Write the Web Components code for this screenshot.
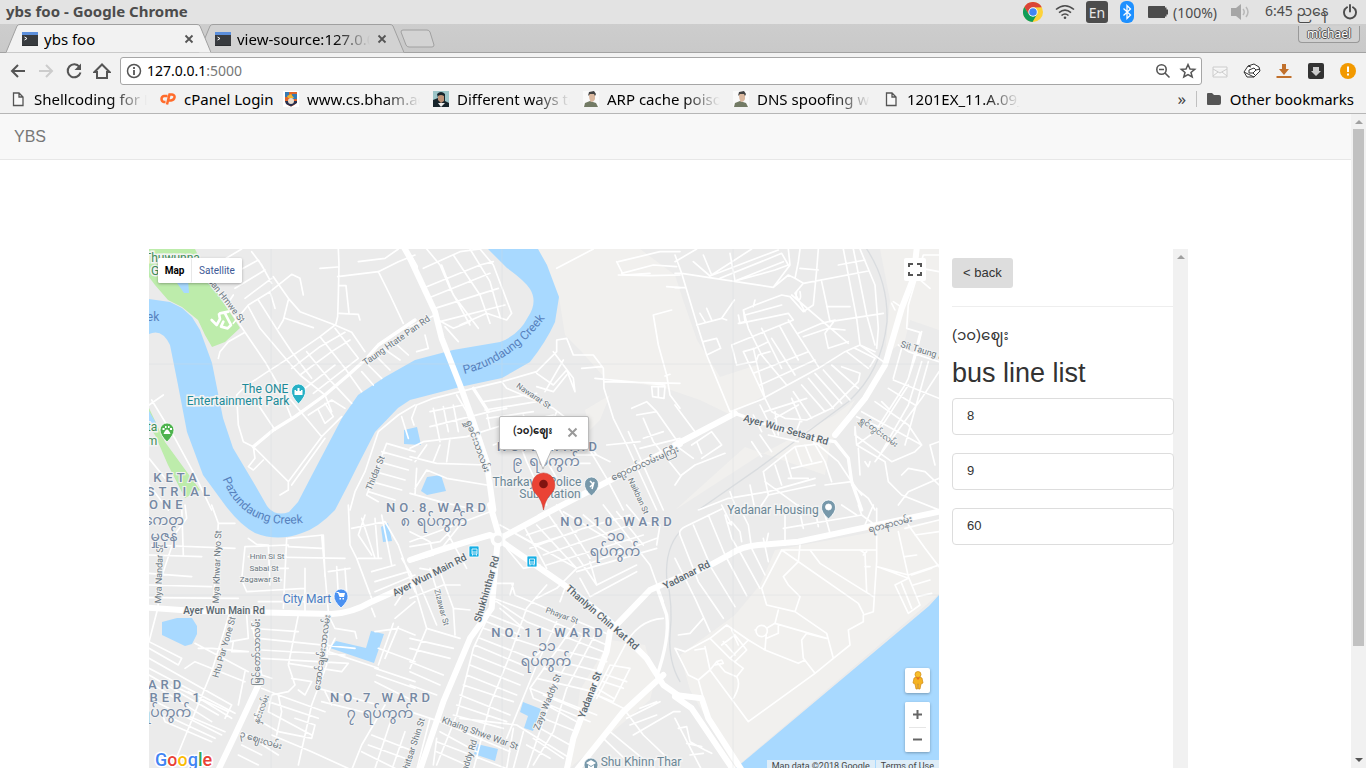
<!DOCTYPE html>
<html lang="en">
<head>
<meta charset="utf-8">
<title>ybs foo</title>
<style>
html, body { margin: 0; height: 100%; overflow: hidden; background: #fff; }
body { display: flex; flex-direction: column; font-family: "Liberation Sans", Arial, "Noto Sans Myanmar", sans-serif; font-size: 13px; color: #333; }
</style>
</head>
<body>
<system-bar></system-bar>
<tab-strip>
  <browser-tab active>ybs foo</browser-tab>
  <browser-tab>view-source:127.0.0.1:5000</browser-tab>
</tab-strip>
<address-bar></address-bar>
<bookmarks-bar></bookmarks-bar>
<page-view>
  <site-nav slot="nav">YBS</site-nav>
  <city-map></city-map>
  <bus-panel stop="(၁၀)ဈေး">
    <bus-line>8</bus-line>
    <bus-line>9</bus-line>
    <bus-line>60</bus-line>
  </bus-panel>
</page-view>

<script>
function element(name, html) {
  const template = document.createElement('template');
  template.innerHTML = html;
  customElements.define(name, class extends HTMLElement {
    constructor() {
      super();
      this.attachShadow({ mode: 'open' }).append(template.content.cloneNode(true));
    }
    connectedCallback() {
      const stop = this.shadowRoot.querySelector('[data-stop]');
      if (stop && this.hasAttribute('stop')) stop.textContent = this.getAttribute('stop');
    }
  });
}
const UI = 'font-family: "Noto Sans", "Open Sans", "Noto Sans Myanmar", sans-serif;';

element('system-bar', `
<style>
:host { display: flex; align-items: center; flex: none; height: 24px; padding: 0 9px 0 6px; background: #e3e3e3; color: #4c4c4c; ${UI} font-size: 14px; }
h1 { margin: 0; flex: 1; font-size: 15px; line-height: 22px; height: 24px; font-weight: 700; }
.tray { display: flex; align-items: center; }
svg { display: block; }
.en { width: 22px; height: 22px; line-height: 24px; border-radius: 3px; background: #4c4c4c; color: #e8e8e8; text-align: center; margin: 0 12px 0 11px; }
.wifi { margin-left: 12px; }
.battery { margin: 0 4px 0 14px; }
.volume { margin: 0 14px 0 12px; }
.power { margin-left: 14px; }
.clock { width: 64px; white-space: nowrap; line-height: 20px; height: 22px; }
.level { width: 46px; white-space: nowrap; }
</style>
<h1>ybs foo - Google Chrome</h1>
<div class="tray">
  <svg width="20" height="20" viewBox="0 0 20 20"><circle cx="10" cy="10" r="10" fill="#fdd23a"/><path d="M1.3 5A10 10 0 0 1 18.8 5.3L10 5.4 5.8 12.5Z" fill="#db4437"/><path d="M1.3 5A10 10 0 0 0 9.5 20L14 12.3 6 12.5Z" fill="#0f9d58"/><circle cx="10" cy="10" r="4.7" fill="#fff"/><circle cx="10" cy="10" r="3.8" fill="#4285f4"/></svg>
  <svg class="wifi" width="20" height="16" viewBox="0 0 20 16" fill="none" stroke="#4c4c4c" stroke-width="1.6"><path d="M1 5.5Q10-2 19 5.5M4 8.7Q10 3.5 16 8.7M6.5 11.5Q10 8.5 13.5 11.5"/><circle cx="10" cy="13.8" r="1.3" fill="#4c4c4c" stroke="none"/></svg>
  <span class="en">En</span>
  <svg width="14" height="22" viewBox="0 0 14 22"><rect width="14" height="22" rx="6" fill="#1e90ff"/><path d="M3.5 7.5L10.5 14 7 17.5V4.5L10.5 8 3.5 14.5" fill="none" stroke="#fff" stroke-width="1.3"/></svg>
  <svg class="battery" width="21" height="12" viewBox="0 0 21 12"><path d="M1 0H17V12H1Q0 12 0 11V1Q0 0 1 0M17 1.5H18.5V3.5H20V8.5H18.5V10.5H17Z" fill="#4c4c4c"/></svg>
  <span class="level">(100%)</span>
  <svg class="volume" width="20" height="16" viewBox="0 0 20 16"><path d="M0 4H5L10 0V16L5 12H0Z" fill="#a6a6a6"/><path d="M12 5Q14.500 8 12 11M15 3Q19 8 15 13" fill="none" stroke="#b8b8b8" stroke-width="1.5"/></svg>
  <span class="clock">6:45 ညနေ</span>
  <svg class="power" width="14" height="16" viewBox="0 0 14 16" fill="none" stroke="#4c4c4c" stroke-width="1.9" stroke-linecap="round"><path d="M4 3.300A6 6 0 1 0 10 3.300M7 1V7.500"/></svg>
</div>`);

element('tab-strip', `
<style>
:host { display: flex; flex: none; height: 29px; padding: 0 6px; background: linear-gradient(#cdcdcd, #c9c9c9); box-shadow: inset 0 -1px #a3a3a3; ${UI} font-size: 15px; color: #000; }
.new { align-self: center; width: 35px; height: 19px; padding: 0; border: 0; background: none; margin-left: 8px; }
svg { display: block; }
.user { margin: 2px 0 0 auto; width: 62px; height: 17px; padding: 0; border: 1px solid #999; border-top: 0; border-radius: 0 0 4px 4px; background: #d0d0d0; color: #fff; ${UI} font-size: 12px; line-height: 16px; text-shadow: 1px 0 #555, -1px 0 #555, 0 1px #555, 0 -1px #555; }
</style>
<slot></slot>
<button class="new" aria-label="New tab"><svg width="35" height="19" viewBox="0 0 35 19"><path d="M3 1H27Q29 1 30 3L34 16Q34 18 32 18H9Q7 18 6 16L1 3Q1 1 3 1Z" fill="#d3d3d3" stroke="#a0a0a0"/></svg></button>
<button class="user">michael</button>`);

element('browser-tab', `
<style>
:host { position: relative; display: flex; align-items: center; box-sizing: border-box; width: 205px; height: 29px; padding: 0 16px; margin-right: -12px; z-index: 0; }
:host([active]) { z-index: 1; --tab: #f2f2f2; }
.shape { position: absolute; inset: 0; width: 100%; height: 100%; z-index: -1; fill: var(--tab, #d2d2d2); }
.label { flex: 1; margin: 0 6px; white-space: nowrap; overflow: hidden; mask-image: linear-gradient(90deg, #000 calc(100% - 36px), transparent); }
:host([active]) .label { mask-image: none; }
button { flex: none; display: block; padding: 0; border: 0; background: none; width: 12px; height: 12px; }
svg { display: block; flex: none; }
</style>
<svg class="shape" viewBox="0 0 205 29" preserveAspectRatio="none"><path d="M0 28.500L11 2Q12 .5 14 .5H191Q193 .5 194 2L205 28.500Z"/><path d="M0 28.500L11 2Q12 .5 14 .5H191Q193 .5 194 2L205 28.500" fill="none" stroke="#a0a0a0"/></svg>
<svg width="16" height="14" viewBox="0 0 16 14"><rect width="16" height="14" fill="#2c2e31"/><path d="M0 0H16V3H0Z" fill="#5c8fdc"/><path d="M0 3H16V13H0Z" fill="#383b3f"/><path d="M2.500 5L5 6.500 2.500 8" fill="none" stroke="#fff"/></svg>
<span class="label"><slot></slot></span>
<button aria-label="Close tab"><svg width="12" height="12" viewBox="0 0 12 12" stroke="#555" stroke-width="1.8"><path d="M2.500 2.500L9.500 9.500M9.500 2.500L2.500 9.500"/></svg></button>`);

element('address-bar', `
<style>
:host { display: flex; align-items: center; flex: none; height: 35px; padding: 0 9px 0 9px; background: #f2f2f2; ${UI} }
button { flex: none; display: block; width: 18px; height: 18px; padding: 0; border: 0; background: none; margin-right: 10px; }
svg { display: block; fill: none; stroke: #555; stroke-width: 2; }
.box { position: relative; display: flex; align-items: center; flex: 1; box-sizing: border-box; height: 28px; margin: 0 9px 0 -1px; padding: 0 4px; border: 1px solid #a6a6a6; border-radius: 3px; background: #fff; font-size: 14px; }
input { flex: 1; min-width: 0; padding: 0; border: 0; outline: 0; margin-left: 4px; font: inherit; color: transparent; background: none; caret-color: #000; }
.url { position: absolute; left: 26px; color: #000; pointer-events: none; }
.url i { font-style: normal; color: #777; }
.box button { margin: 0; width: 18px; }
.box button + button { margin-left: 7px; }
.ext { margin: 0 0 0 14px; }
.ext.first { margin-left: 0; }
</style>
<button aria-label="Back"><svg width="18" height="18" viewBox="0 0 18 18"><path d="M16 9H3M9 3L3 9 9 15"/></svg></button>
<button aria-label="Forward"><svg width="18" height="18" viewBox="0 0 18 18" style="stroke:#ccc"><path d="M2 9H15M9 3L15 9 9 15"/></svg></button>
<button aria-label="Reload"><svg width="18" height="18" viewBox="0 0 18 18"><path d="M14.500 5A6.500 6.500 0 1 0 15.500 10.500"/><path d="M16 1.500V8H9.500Z" fill="#555" stroke="none"/></svg></button>
<button aria-label="Home"><svg width="18" height="18" viewBox="0 0 18 18"><path d="M1.500 10L9 2.500 16.500 10H14V16H4V10Z"/></svg></button>
<div class="box">
  <svg width="18" height="18" viewBox="0 0 18 18" style="stroke-width:1.5"><circle cx="9" cy="9" r="6.500"/><path d="M9 8V13M9 5V7" style="stroke-width:1.800"/></svg>
  <input aria-label="Address">
  <span class="url">127.0.0.1<i>:5000</i></span>
  <button aria-label="Zoom"><svg width="18" height="18" viewBox="0 0 18 18" style="stroke-width:1.600"><circle cx="7.500" cy="7.500" r="4.700"/><path d="M11 11L15.500 15.500M5 7.500H10"/></svg></button>
  <button aria-label="Bookmark"><svg width="18" height="18" viewBox="0 0 18 18" style="stroke-width:1.500"><path d="M9 2.500L11 7 15.700 7.300 12 10.400 13.200 15 9 12.500 4.800 15 6 10.400 2.300 7.300 7 7Z"/></svg></button>
</div>
<button class="ext first" aria-label="Mail extension"><svg width="18" height="18" viewBox="0 0 18 18" style="stroke:#ccc;stroke-width:1"><path d="M2 5H16V15H2ZM2 7L9 11 16 7M2 14L7 10M16 14L11 10" fill="#f7f7f7"/></svg></button>
<button class="ext" aria-label="Sketch extension"><svg width="18" height="18" viewBox="0 0 18 18" style="stroke:#333;stroke-width:1"><path d="M1 10L5 4 11 2 16 5 17 9 11 15 4 15Z" fill="#fff"/><path d="M6 8L11 6 13 8 10 11 6 11ZM1 10L5 12 11 15M5 4L8 5M13 8L17 7M10 11L12 13"/></svg></button>
<button class="ext" aria-label="Downloads"><svg width="18" height="18" viewBox="0 0 18 18"><path d="M7 2H11V7H14L9 13 4 7H7Z" fill="#c1702c" stroke="none"/><path d="M1.500 15H16.500" style="stroke:#c1702c"/></svg></button>
<button class="ext" aria-label="Download manager"><svg width="18" height="18" viewBox="0 0 18 18"><rect x="1" y="1" width="16" height="16" rx="2" fill="#333" stroke="none"/><path d="M6 5H12V9H14L9 14 4 9H6Z" fill="#ccc" stroke="none"/></svg></button>
<button class="ext" style="margin-right:0" aria-label="Update"><svg width="18" height="18" viewBox="0 0 18 18"><circle cx="9" cy="9" r="8" fill="#f29900" stroke="none"/><path d="M9 4.500V10M9 11.500V13.500" style="stroke:#fff"/></svg></button>`);

element('bookmarks-bar', `
<style>
:host { display: flex; align-items: center; flex: none; box-sizing: border-box; height: 26px; padding: 0 12px 4px 10px; background: #f2f2f2; border-bottom: 1px solid #b6b6b6; ${UI} font-size: 15px; }
nav { display: flex; gap: 12px; flex: 1; min-width: 0; }
a { display: flex; align-items: center; flex: none; gap: 8px; color: #000; text-decoration: none; white-space: nowrap; line-height: 20px; }
a.cut span { width: 114px; overflow: hidden; mask-image: linear-gradient(90deg, #000 76px, transparent 113px); }
a.short span { width: 87px; }
svg { display: block; flex: none; }
button { width: 20px; height: 20px; padding: 0; border: 0; background: none; ${UI} font-size: 17px; line-height: 18px; color: #444; }
.line { width: 1px; height: 16px; margin: 0 9px 0 4px; background: #c0c0c0; }
</style>
<nav>
<a class="cut" href="#"><svg width="16" height="16" viewBox="0 0 16 16"><path d="M3.500 2H9L13 6V14.500H3.500ZM9 2V6H13" fill="#f8f8f8" stroke="#555" stroke-width="1.300"/></svg><span>Shellcoding for L</span></a>
<a class="short" href="#"><svg width="16" height="16" viewBox="0 0 16 16" fill="none" stroke="#ff6c2c" stroke-width="2.500"><path d="M7.500 5H4Q1.500 5.500 1.500 8T4 11H5.500M7 13.500L9.500 3.500H12Q15 4 14.500 6.500T11 9.500H9"/></svg><span>cPanel Login</span></a>
<a class="cut" href="#"><svg width="16" height="16" viewBox="0 0 16 16"><path d="M0 0H16V16H0Z" fill="#fff"/><path d="M2 1H14V10Q13 14 8 15.500 3 14 2 10Z" fill="#e0652b"/><path d="M2 1H6V6H2ZM9 3H14V8H9Z" fill="#357ab4"/><path d="M2 10H14V12L8 15.500 3 13Z" fill="#28304f"/><circle cx="8" cy="10" r="3" fill="#e8ddd0"/><path d="M4 5L8 3 11 7H5Z" fill="#f1b530"/></svg><span>www.cs.bham.ac</span></a>
<a class="cut" href="#"><svg width="16" height="16" viewBox="0 0 16 16"><path d="M0 0H16V16H0Z" fill="#9cc5c8"/><path d="M0 9L5 7 4 3Q8-1 12 3V10L16 12V16H0Z" fill="#17242b"/><path d="M5 5Q8 3 11 5V10L8 12 5 9Z" fill="#bd9277"/><path d="M5 12L8 16 12 12Z" fill="#eee"/></svg><span>Different ways to</span></a>
<a class="cut" href="#"><svg width="16" height="16" viewBox="0 0 16 16"><path d="M0 0H16V16H0Z" fill="#fafafa"/><path d="M1 16L2 12 7 10 13 12 15 16Z" fill="#737b65"/><path d="M6 3H12V8Q11 11 8 11 6 9 6 3" fill="#dab89f"/><path d="M5 5L6 1 11 0 13 3 12 5 11 3H7Z" fill="#424242"/></svg><span>ARP cache poison</span></a>
<a class="cut" href="#"><svg width="16" height="16" viewBox="0 0 16 16"><path d="M0 0H16V16H0Z" fill="#fafafa"/><path d="M1 16L2 12 7 10 13 12 15 16Z" fill="#737b65"/><path d="M6 3H12V8Q11 11 8 11 6 9 6 3" fill="#dab89f"/><path d="M5 5L6 1 11 0 13 3 12 5 11 3H7Z" fill="#424242"/></svg><span>DNS spoofing wi</span></a>
<a class="cut" href="#"><svg width="16" height="16" viewBox="0 0 16 16"><path d="M3.500 2H9L13 6V14.500H3.500ZM9 2V6H13" fill="#f8f8f8" stroke="#555" stroke-width="1.300"/></svg><span>1201EX_11.A.09_</span></a>
</nav>
<button aria-label="More bookmarks">»</button><i class="line"></i>
<a href="#"><svg width="16" height="14" viewBox="0 0 16 14"><path d="M2 1H6L8 3H13Q15 3 15 5V11Q15 13 13 13H2Q1 13 1 12V2Q1 1 2 1Z" fill="#555"/></svg><span>Other bookmarks</span></a>`);

element('page-view', `
<style>
:host { display: flex; flex: 1; min-height: 0; }
.page { flex: 1; min-width: 0; overflow: hidden; }
main { display: grid; grid-template-columns: minmax(0, 1fr) 249px; margin: 89px 163px 0 149px; height: 525px; }
.bar { flex: none; width: 11px; padding: 6px 2px; background: #f1f1f1; display: flex; flex-direction: column; align-items: center; gap: 5px; box-sizing: content-box; }
.bar i { width: 11px; flex: 0 1 517px; background: #c1c1c1; }
.bar b { width: 0; height: 0; border: 4px solid transparent; border-top: 0; border-bottom-color: #a0a0a0; }
.bar b:last-child { border-bottom: 0; border-top: 4px solid #555; margin-top: auto; }
</style>
<div class="page"><slot name="nav"></slot><main><slot></slot></main></div>
<div class="bar"><b></b><i></i><b></b></div>`);

element('site-nav', `
<style>
:host { display: flex; align-items: center; box-sizing: border-box; height: 46px; padding: 0 14px; background: #f8f8f8; border-bottom: 1px solid #e7e7e7; font-size: 16px; }
a { color: #777; text-decoration: none; }
</style>
<a href="#"><slot></slot></a>`);

element('bus-panel', `
<style>
:host { display: flex; }
.body { position: relative; z-index: 1; flex: 1; min-width: 0; padding: 9px 0 0 13px; }
button { display: block; height: 30px; padding: 0 11px 2px; border: 0; border-radius: 3px; background: #ddd; color: #333; font: 13px "Liberation Sans", Arial, sans-serif; }
hr { margin: 18px 0 16px; border: 0; border-top: 1px solid #eee; }
h4 { margin: 0; font-size: 15px; line-height: 24px; font-weight: 400; }
h2 { margin: 11px 0 9px; font-size: 27px; line-height: 31px; font-weight: 400; }
ul { display: flex; flex-direction: column; gap: 18px; margin: 0 -1px 0 0; padding: 0; list-style: none; }
.track { width: 15px; background: #f1f1f1; display: flex; justify-content: center; }
.track i { width: 0; height: 0; margin-top: 6px; border: 4px solid transparent; border-top: 0; border-bottom-color: #a0a0a0; }
</style>
<div class="body">
  <button>&lt; back</button><hr>
  <h4 data-stop></h4>
  <h2>bus line list</h2>
  <ul><slot></slot></ul>
</div>
<div class="track"><i></i></div>`);

element('bus-line', `
<style>
:host { display: block; }
a { display: block; box-sizing: border-box; height: 37px; padding: 0 14px; line-height: 33px; border: 1px solid #ddd; border-radius: 4px; color: #333; text-decoration: none; background: #fff; }
</style>
<a href="#"><slot></slot></a>`);

element('city-map', `
<style>
:host { display: block; position: relative; overflow: hidden; background: #ebebeb; font-family: Roboto, "Noto Sans Myanmar", sans-serif; }
svg { display: block; }
.map { width: 100%; height: 100%; }
.roads path { fill: none; stroke: #fff; stroke-width: 5; stroke-linecap: round; stroke-linejoin: round; }
.roads .m { stroke-width: 10; }
.roads .w { stroke-width: 18; }
text { fill: #6b7780; font-size: 9px; paint-order: stroke; stroke: #f3f3f3; stroke-width: 2px; text-anchor: middle; }
.major text { font-size: 10px; font-weight: 500; fill: #59666e; }
.ward text { fill: #7588a3; font-size: 13px; font-weight: 500; letter-spacing: 4px; }
.ward .my { letter-spacing: 0; font-size: 14px; font-weight: 400; }
.poi text { fill: #6b8796; font-size: 12px; stroke-width: 3px; }
.water text { fill: #5781bd; font-size: 12px; stroke: none; }
.google text { font-size: 18px; font-weight: 500; stroke: #fff; stroke-width: 3px; text-anchor: start; }
button { display: grid; place-items: center; padding: 0; border: 0; background: #fff; font: 10px Roboto, sans-serif; color: #565656; }
.types, .zoom, .peg, .full { position: absolute; box-shadow: 0 1px 3px rgba(0,0,0,.3); border-radius: 2px; background: #fff; }
.types { left: 9px; top: 9px; display: flex; height: 25px; }
.types button { width: 50px; border-radius: 2px; }
.types button:first-child { width: 34px; font-weight: 700; color: #000; border-right: 1px solid #e8e8e8; }
.full { right: 13px; top: 9px; width: 22px; height: 23px; box-shadow: none; }
.peg { right: 9px; bottom: 81px; width: 25px; height: 25px; }
.zoom { right: 9px; bottom: 22px; width: 25px; }
.zoom button { width: 25px; height: 25px; border-radius: 2px; }
.zoom hr { margin: 0 4px -1px; border: 0; border-top: 1px solid #e6e6e6; position: relative; }
footer { position: absolute; right: 0; bottom: 0; display: flex; height: 14px; font-size: 9px; line-height: 13px; color: #444; }
footer > * { background: rgba(245,245,245,.7); padding: 0 5px; color: #444; text-decoration: none; }
footer a { margin-left: 1px; }
.info { position: absolute; left: calc(50% - 45px); top: 167px; display: flex; align-items: center; box-sizing: border-box; width: 90px; height: 34px; padding: 0 10px 2px 13px; border: 1px solid #bbb; border-radius: 2px; background: #fff; box-shadow: 0 2px 5px rgba(0,0,0,.25); font-size: 10px; font-weight: 700; color: #222; white-space: nowrap; }
.info span { flex: 1; }
.info .tail { position: absolute; left: 34px; top: 31px; }
</style>
<svg class="map" viewBox="149 249 790 525" preserveAspectRatio="xMidYMid slice">
<path d="M149 249H939V774H149Z" fill="#ebebeb"/>
<g fill="#f1f0ee">
<path d="M538 249H640L675 275 683 300 697 340 720 377 757 365 765 395 731 415 700 400 665 388 605 378 580 350 565 335 559 297Z"/>
<path d="M880 249H939V330L910 320 905 340 885 355 890 300Z"/>
<path d="M675 510L760 455 835 415 855 400 830 445 825 475 745 447Z"/>
<path d="M680 655L735 615 760 585 775 550 939 520V594L735 768 690 690Z"/>
<path d="M570 768L580 690 610 640 645 645 655 680 650 700Z"/>
<path d="M585 410L610 395 600 420 590 430Z"/>
</g>
<g fill="#bdecab"><path d="M149 249H195L208 275 225 305 240 328 225 342 212 347 205 335 198 320 182 307 168 300 155 285 149 277Z"/><path d="M149 408L165 442 200 490 185 498 168 465 155 435 149 427Z"/></g>
<g fill="#a8d9ff">
<path d="M149 299L170 302 182 308 192 317 200 330 212 363 223 418 233 448 255 485 267 506 Q275 517 289 512L298 502 312 475 342 418 358 395 385 377 415 360 453 350 500 342 Q519 335 528 317 Q538 302 530 289 Q525 281 507 268L488 249H538L547 265 559 297 555 322 Q546 342 530 362L502 378 460 387 410 400 398 408 375 432 358 465 348 485 335 510 Q318 528 302 533 Q278 542 255 533 Q240 525 225 505L203 475 187 432 178 385 170 345 Q162 328 149 334Z"/>
<path d="M939 595L929 606 736 768V774H939ZM162 622L177 618H192L197 626V634L192 644 185 646 162 635ZM330 648L336 641 366 648 371 631 384 634 374 663ZM381 527L388 523 392 541 383 542ZM404 430L417 427 421 445 404 444ZM421 491L427 477 441 475 446 491 427 495ZM523 702L541 709 533 731 524 728 528 716 520 712ZM477 744L498 749 495 761 474 754ZM177 283L188 279 189 293 184 293ZM149 411L156 423 149 425Z"/>
</g>
<g class="roads">
<g transform="translate(145 245) scale(.33333)">
<path d="M190 100L245 180 300 262 360 350 400 420 440 520M265 235L310 180 375 140 440 88 465 100 475 150M380 115L350 60 320 20M210 60L290 12M240 100L340 45 355 70M270 130L360 75M300 160L380 100M385 95L430 160 465 200 570 240 620 262 660 320M430 165L415 225 400 250M375 140L390 190M420 220L505 248M340 165L400 260 440 320 500 400M310 185L345 250 430 350 465 390 540 450 560 500M570 240L525 275 430 340 360 385 300 425 275 450 280 540 295 590 325 605M300 262L250 290 225 320 220 340M580 12L582 60 580 150 578 215 572 240M578 95L700 80 760 50 810 30M525 70L578 66M583 122L603 122 612 205M583 205L640 208 645 225M700 80L735 150 775 235M640 50L720 40 760 12M325 605L375 655 430 710 430 735 405 750M325 605L330 640 310 665 325 675 355 645M430 710L530 575 590 515M440 720L540 580M400 420L530 575M440 370L525 305 600 262M465 390L560 320 615 285M480 430L570 360M505 445L640 340M485 320L550 400 620 475M525 275L600 370 650 440M570 250L640 340M490 510L560 465 600 490M520 495L540 535 565 515 540 475M650 380L685 420M670 360L710 400M695 335L735 375M715 310L765 345M745 290L790 330M340 480L390 555M12 480L55 450M20 465L90 580 155 700 200 795M810 480L760 510 700 560 660 680 630 740 615 795M770 515L790 580M725 595L810 620M710 620L800 645M700 650L790 675M690 680L780 705M680 710L770 735M670 740L750 765M725 595L665 750 700 770M12 640L60 700M12 720L70 795"/>
<path d="M245 180L265 150"/>
<path class="m" d="M810 225L700 300 660 345 610 390 540 450 450 515 385 555 325 605"/>
<path style="stroke-width:8" d="M200 225L215 240 225 222 222 208M225 205L250 200M240 205L258 240 248 250 228 245 235 230"/>
<path class="w" d="M770 -5L810 65"/>
</g>
<g transform="translate(410 245) scale(.33333)">
<path d="M50 12L90 60 120 130 180 240M40 70L150 20 210 12 250 60 305 205 290 225 230 205 150 240M50 125L210 60 250 50M65 155L240 85M75 190L265 130M90 230L285 180M95 60L130 150 205 250M130 30L210 150 240 235M180 12L240 110 270 215M75 210L0 245M75 220L130 250 180 230M105 245L145 290M45 270L55 310 20 320M440 70L550 12M620 50L640 90 720 85M625 50L750 20 810 20M635 85L730 60 800 65M625 90L720 92 810 90M770 125L810 128M730 210L785 195M730 210L745 300 770 390 780 450 810 490M515 370L575 365M490 330L550 330 580 370 582 430 610 520 650 600 740 795M490 330L470 280 440 285 440 320 380 380 275 410 190 430 70 460 20 480 5 520 12 540M555 400L765 420M582 410L810 415M765 393L780 388M725 425L765 425 762 460 728 455ZM745 425L745 458M275 410L290 430 350 455 430 490 470 520 530 600 590 700 640 795M380 385L430 420 470 375 495 440M430 320L490 400 495 440M405 440L460 345M380 425L430 440 470 390M220 470L380 445M225 495L380 470M230 520L370 500M140 450L170 500 190 560 210 620M60 500L160 480M70 490L90 590M100 485L115 560M130 480L145 560M60 545L240 500 290 490M0 610L40 590 170 575 280 540 430 510M0 635L80 655 230 660M15 650L50 600M90 600L70 650M120 580L110 650M240 550L230 500M0 745L90 770 200 795M15 730L50 675 110 700 230 720M20 670L15 750M300 520L350 650 410 780M340 510L400 630 480 770M440 500L400 600M505 560L560 630 600 650M500 630L560 630M480 655L540 655M665 490L710 470 740 500 810 600M680 510L740 500M700 520L730 590 810 690M700 580L760 560M690 610L810 580M655 560L760 795M590 600L690 590M250 600L360 560"/>
<path class="m" d="M190 430L235 500"/>
<path class="w" d="M0 40L75 200 95 280 150 420 190 530 230 650 250 795"/>
<path class="w" d="M390 815L810 597"/>
</g>
<g transform="translate(675 245) scale(.33333)">
<path style="stroke:#d9dcdf;stroke-width:4" d="M575 12Q640 110 636 230 Q620 380 520 470L385 570 250 670 70 795"/>
<path d="M0 30L20 85 65 235 95 330 165 500M20 85L295 127M0 85L20 85M0 128L30 128M0 50L65 12M55 50L105 93 230 12M85 30L110 90M105 93L310 15M165 25L180 108 325 50M135 100L320 25 340 60 300 75 180 108M295 127L340 90 360 100 370 50 375 12M340 12L345 60 295 127M375 70L430 75M360 100L385 115 580 78M430 12L425 75 415 180 385 200 345 155 320 150 240 180 205 195 210 230 190 235M505 12L545 220 555 300M535 12L575 210 600 300M555 12L600 120 610 250 605 310M490 60L570 45M440 110L455 180 465 230 625 205M455 185L525 185M385 115L360 145 390 200M375 140Q380 165 370 165T365 140M65 240L140 220 155 225M140 220L178 165M75 205L90 230M95 190L110 225M85 290L125 280 137 310 95 330M240 165L235 185M210 210L320 180M190 210L195 235 340 205 355 225 170 300 185 360 240 350M205 195L220 250 260 330 335 420M260 250L320 370M290 280L360 390M315 245L370 345M340 225L430 365M370 265L440 235 480 225 450 265 460 310 520 290M385 275L460 250 510 255M350 150L520 295M205 320L240 310 280 290M245 345L250 330 285 320M235 310L270 460M205 320L265 450 290 500 330 520 395 525 470 490 550 410 555 385 500 365M235 385L400 320M255 420L420 345M265 460L430 370 510 320 555 300 625 350M515 320L580 370M540 310L600 340 585 365M555 300L600 320M400 400L475 490M420 385L500 475M445 375L525 465M470 360L550 430M380 420L450 500M355 440L410 520M350 460L380 530M165 500L270 460M270 500L395 460M300 520L370 480M255 480L300 570M235 510L260 560M300 500L310 570M280 570L370 590M375 530L360 570M230 590L260 635M255 570L290 620M265 680L360 605 440 595M265 680L280 750 250 795M300 660L320 720M330 630L350 700M390 600L410 650M360 605L380 660M350 670L440 650M415 590L450 650 470 710M430 600L490 650 530 710M340 700L400 700M70 795L160 760 280 740 420 700M270 710L380 790M280 750L420 720M225 720L240 795M165 740L185 795M450 720L530 710 560 750M0 720L20 690 60 660 150 625M0 600L55 640M50 600L110 560 140 600 80 640M65 590L80 625M0 480L60 560M655 170L685 190M650 175L660 195M792 30L745 30 700 180 695 250 735 262 700 400 690 420 600 560 545 600M740 70L792 80M730 100L765 130M670 300L700 320 792 350M680 310L655 400M740 260L720 340 700 400M655 405L792 460M640 430L720 480M600 470L700 540 740 600 720 620 650 650 540 570 540 545 545 600 630 650 640 710 680 750 792 795M620 470L640 490M700 420L610 560M740 350L700 480 620 620M760 350L690 600M792 380L740 460 600 650M545 515L620 550M560 500L740 600M550 610L555 690M570 650L580 665 585 650M680 690L700 670 750 680 792 720M670 780L700 740 792 700M765 600L792 590M765 600L780 660M600 795L580 760 530 720"/>
<path class="w" d="M725 12L715 100 680 190 630 360 570 460 480 570M0 600L180 505"/>
<path class="m" d="M180 505L250 530 410 580 480 590 520 640 530 710 560 795"/>
</g>
<g transform="translate(145 505) scale(.33333)">
<path d="M120 0L125 40 95 80 35 260 40 305M200 0L220 55 270 55M220 55L205 305M20 120L270 130M12 150L170 155M12 205L140 215M12 240L200 245M12 278L280 280M110 0L115 150M310 100L335 118 370 120 375 240M300 125L430 120M310 155L600 160M330 190L430 190M300 220L410 225M300 125L290 225 305 260 480 250M430 100L535 90 540 215M430 125L530 130M425 100L415 310M530 90L550 320M480 190L480 320M550 200L615 190M575 185L580 270M600 190L605 260M340 290L540 290M610 0L615 120 635 160 680 280M660 30L640 90 680 150M620 70L720 50 760 120 810 260M640 160L710 160M680 200L750 180M690 230L790 200M690 260L810 210M680 310L690 335M650 40L690 160M690 40L700 160M710 30L740 180M790 240L750 300M770 160L800 210M37 315L12 410M255 320L200 500 110 720 80 795M12 410L110 460 100 480 12 430M12 460L260 600M12 490L270 625M12 510L220 630M12 530L200 650M120 490L150 470 300 530M150 415L310 500M160 430L200 430 310 440M260 330L255 410 310 400 305 330M265 410L260 440 305 440M12 580L230 690M80 540L250 620M50 620L60 650 200 710M60 630L210 700M100 620L240 680M130 560L260 640M260 600L240 640M300 500L280 600M320 350L350 510 380 520M320 370L460 380M340 400L630 430M350 435L600 450M350 460L610 475 590 500 430 475M460 330L430 480 450 540 430 560 380 570M550 330L570 370 630 380 635 400M550 340L545 480 500 600 460 780M570 400L550 440 700 490M440 520L500 530 480 570 460 555M350 550L400 570 540 620M380 570L370 620 500 690M370 590L520 640M400 570L410 620 395 690M345 600L330 640 400 680 500 700 510 660 450 640M290 690L370 710M290 680L400 750M290 720L350 750M280 750L340 780M380 690L500 740 620 795M520 550L700 600M530 590L690 630M540 560L560 600M690 380L760 370 810 390M745 355L700 480M760 365L720 460M700 430L810 470M690 490L810 530M695 510L810 550M690 530L810 590M720 600L650 720 620 795M740 640L690 790M680 690L810 740M670 720L780 760M650 740L760 795M780 680L740 795M750 340L810 290"/>
<path class="w" d="M12 308L150 318 560 327Q620 325 680 290L810 232M340 540L270 690 220 795"/>
</g>
<g transform="translate(410 505) scale(.33333)">
<path style="stroke:#d9dcdf;stroke-width:4" d="M810 80Q765 130 770 220 Q790 300 780 390 Q775 470 810 530"/>
<path d="M0 80L60 110 70 150 0 170M0 110L110 70 240 20M0 125L90 110 120 80M95 130L150 60M110 80L170 190M0 280L100 240 150 240M30 190L90 200 130 310 135 390M60 190L110 350M0 200L50 370 150 400M50 370L0 490M30 240L80 360M130 310L180 315M0 400L130 430M0 430L120 460M0 470L100 510M0 500L90 540M0 540L80 570M270 60L500 190 440 250 380 280M270 60L380 120M340 60L410 190M350 90L440 60M360 130L520 70 660 30M380 60L500 190M370 120L500 80M400 150L660 60M410 180L700 90M500 190L740 100M500 200L740 130M540 170L560 240 680 180M510 220L540 275 680 200M410 20L560 240M440 0L540 160M460 20L590 100M520 30L640 130M580 0L720 180 760 290M620 20L700 120M650 0L700 60M690 50L750 60 740 120M450 290L465 250M290 130L340 190 390 180M250 280L360 320 590 420M260 290L350 350 580 440M270 310L340 370M305 235L315 270 600 390M260 235L310 235 300 270M410 240L350 310 300 450 240 600 190 795M500 350L360 550 370 580 540 650M530 370L440 530 350 795M560 380L470 550 430 680 370 780M440 350L380 480 290 700M255 290L190 430 140 630 80 780M240 330L340 370M230 350L330 390M220 370L400 430 380 450M210 400L390 470M195 420L360 490M190 450L340 510M180 480L330 540M170 510L320 570M160 540L310 590M150 570L300 630M140 600L290 650M130 630L280 670M150 640L320 660 480 760M430 430L590 470M410 460L570 500M400 490L560 530M380 520L550 560M360 550L560 630M400 570L520 620M410 600L500 650M400 640L500 680M390 670L480 720M370 700L460 760M350 720L420 760M0 620L90 650 300 740M60 640L20 795M90 680L200 740M80 710L300 795M80 740L170 780M80 700L70 780M310 670L290 790M340 680L310 790M600 480L660 490 610 590 560 570M560 550L610 580M580 530L640 550M590 510L650 530M600 480L550 580M560 570L640 610M640 610L700 690 810 795M650 640L750 590M660 660L740 630M670 690L790 620 810 620M690 610L740 590M580 700L680 795M600 680L740 795M700 795L740 760"/>
<path class="m" d="M740 245L770 330Q780 400 740 515"/>
<path d="M560 580L640 430Q680 345 760 340"/>
<path class="w" d="M240 0L265 85 245 310 180 400 100 590 30 795M0 165Q100 130 240 90L265 103 410 25M265 103L470 245 590 340 710 460 760 540 810 575M470 795L490 700 590 440 600 380 720 255 810 215M500 795L640 620 760 510"/>
<circle cx="264" cy="103" r="17" fill="#ebebeb" stroke="#fff" stroke-width="11"/>
</g>
<g transform="translate(675 505) scale(.33333)">
<path d="M0 160L60 280 105 380M15 90L70 230 145 340M15 90Q10 75 30 65L140 12M55 60L110 190 180 305M100 30L150 150 215 272M150 30L170 100 200 150 255 250M140 0L170 60 155 50M200 20L220 60 230 130 270 210M265 100L280 170M170 50L195 80 200 110M330 30L330 120M280 85L275 110M370 0L385 70M420 10L430 65M450 30L465 85M325 70L560 30M500 0L545 30M550 0L560 30 600 60M605 10L605 170 595 320 565 330 565 350 520 375 525 420 475 460 420 505 220 650 105 495M595 0L570 60M320 135L605 135M320 135L550 295 565 325M375 120L370 170 325 215 340 240 375 275 360 320M320 135L260 250 275 300 360 320 455 385 475 460M405 135L435 175 595 275M555 135L570 145 575 260M570 185L585 185M565 150L575 140M605 185L700 210 792 180M620 190L700 220M670 80L700 215 735 300 700 325 660 240 700 220M680 235L710 310M690 70L792 45M700 60L750 130 792 185M710 210L770 190M715 240L765 225M725 275L770 265M690 155L725 150M720 90L792 80M310 315L300 355 455 400 395 385 380 405 385 460 420 505M300 355L275 370 240 375M220 405L270 435 370 475 390 465M275 370L270 435M310 360L310 385 275 400M105 400L155 360 220 405M105 400L165 460 205 490 185 515 150 500 125 470 105 495M125 470L140 465 145 475 120 480M145 410L180 450M180 390L215 435 180 470M170 375L190 420M140 420L180 390M185 515Q200 540 175 580M90 425L105 495M0 430L30 440 105 400M60 435L90 430M0 430L40 510 70 525 105 495M70 525L85 580M10 390L45 385 85 340M0 640L80 795M10 670L35 665 45 710 90 735 110 745M35 715L80 725M45 750L85 745M220 405L165 460"/>
<circle cx="260" cy="378" r="17" style="fill:#f1f0ee;stroke:#fff;stroke-width:5"/>
<path class="w" d="M0 230L110 178 170 145Q200 125 250 120L370 110 792 20M0 570L80 580 100 640 200 795M0 575L50 610 175 795"/>
</g>
</g>
<g stroke="#d4d8dc" opacity=".35"><path d="M271 249V774M502 249V774M733 249V774M149 364H939M149 595H939"/></g>
<g class="water"><path id="creek" d="M464 374Q512 362 545 318" fill="none"/><text><textPath href="#creek" startOffset="50%">Pazundaung Creek</textPath></text><path id="creek2" d="M223 480Q243 530 302 523" fill="none"/><text><textPath href="#creek2" startOffset="50%">Pazundaung Creek</textPath></text><text x="153" y="321">ek</text></g>
<g>
<text transform="translate(398 343) rotate(-35)">Taung Htate Pan Rd</text><text transform="translate(224 302) rotate(52)">San Hmwe St</text>
<text transform="translate(378 474) rotate(-68)">Thidar St</text><text transform="translate(532 398) rotate(34)" style="font-size:8px">Nawarat St</text>
<text transform="translate(636 497) rotate(65)" style="font-size:8px">Naikban St</text><text transform="translate(924 354) rotate(17)">Sit Taung Rd</text>
<text x="267" y="559" style="font-size:8px">Hnin Si St</text><text x="264" y="571" style="font-size:8px">Sabai St</text><text x="260" y="582" style="font-size:8px">Zagawar St</text>
<text transform="translate(162 574) rotate(-88)">Mya Nandar St</text><text transform="translate(220 567) rotate(-88)">Mya Khwar Nyo St</text>
<text transform="translate(227 648) rotate(-74)">Htu Par Yone St</text><text transform="translate(439 608) rotate(75)" style="font-size:8px">Zizawar St</text>
<text transform="translate(561 618) rotate(20)" style="font-size:8px">Phayar St</text><text transform="translate(550 703) rotate(-68)">Zaya Waddy St</text>
<text transform="translate(479 736) rotate(20)">Khaing Shwe War St</text><text transform="translate(416 747) rotate(-72)">Thitsar Shin St</text><text transform="translate(471 760) rotate(-72)">Waddy Rd</text>
<text transform="translate(475 447) rotate(70)">ရှုခင်းသာလမ်း</text><text transform="translate(646 466) rotate(-24)">ရော့ဝတ်လမ်းမကြီး</text>
<text transform="translate(877 434) rotate(36)" style="font-size:8px">ရွှင်တွင်းလမ်း</text><text transform="translate(891 527) rotate(-14)">ရတနာလမ်း</text>
<text transform="translate(260 652) rotate(-90)">မြင်တော်သာလမ်း</text><text transform="translate(325 653) rotate(-82)">အောင်ချမ်းသာလမ်း</text><text transform="translate(264 710) rotate(-70)" style="font-size:8px">နှင်းလမ်း</text><text transform="translate(260 743) rotate(17)">၃ ဈေးလမ်း</text>
</g>
<g class="major">
<text x="224" y="614">Ayer Wun Main Rd</text><text transform="translate(431 578) rotate(-27)">Ayer Wun Main Rd</text><text transform="translate(490 590) rotate(-74)">Shukhinthar Rd</text>
<text transform="translate(785 433) rotate(16)">Ayer Wun Setsat Rd</text><text transform="translate(600 620) rotate(41)">Thanlyin Chin Kat Rd</text><text transform="translate(593 696) rotate(-69)">Yadanar St</text><text transform="translate(688 578) rotate(-27)">Yadanar Rd</text>
</g>
<g class="ward">
<text x="438" y="512">NO.8 WARD</text><text class="my" x="434" y="526">၈ &nbsp;ရပ်ကွက်</text><text x="549" y="451">NO.9 WARD</text><text class="my" x="546" y="466">၉ &nbsp;ရပ်ကွက်</text>
<text x="618" y="526">NO.10 WARD</text><text class="my" x="616" y="541">၁၀</text><text class="my" x="615" y="556">ရပ်ကွက်</text><text x="549" y="637">NO.11 WARD</text><text class="my" x="547" y="651">၁၁</text><text class="my" x="546" y="666">ရပ်ကွက်</text>
<text x="382" y="702">NO.7 WARD</text><text class="my" x="380" y="718">၇ &nbsp;ရပ်ကွက်</text>
<text x="177" y="482">KETA</text><text x="174" y="496">USTRIAL</text><text x="162" y="509">ZONE</text><text class="my" x="164" y="525">ကေတ</text><text class="my" x="164" y="541">မှုဇုန်</text>
<text x="159" y="689">WARD</text><text x="169" y="702">MBER 1</text><text class="my" x="166" y="717">ရပ်ကွက်</text>
</g>
<g class="poi">
<text x="265" y="393" style="fill:#208a98">The ONE</text><text x="238" y="405" style="fill:#208a98">Entertainment Park</text><text x="307" y="603" style="fill:#4b7fc4">City Mart</text>
<text x="537" y="486">Tharkayta Police</text><text x="550" y="498">Sub Station</text><text x="773" y="514">Yadanar Housing</text><text x="641" y="766">Shu Khinn Thar</text>
<text x="172" y="262" style="fill:#3e8e55">Thuwunna</text><text x="155" y="275" style="fill:#3e8e55">G</text><text x="152" y="431" style="fill:#3e8e55">ta</text><text x="152" y="445" style="fill:#3e8e55">m</text>
</g>
<g stroke="#fff" stroke-width=".8">
<path fill="#26b0c5" d="M298.500 404Q291 396 291.500 391A7 7 0 0 1 305.500 391Q306 396 298.500 404Z"/><path stroke="none" fill="#fff" d="M294.500 390H296V391H297.500V388H299.500V391H301V390H302.500V395H294.500Z"/>
<path fill="#4db34d" d="M167 442Q160 435 160 430A7 7 0 0 1 174 430Q174 435 167 442Z"/><path stroke="none" fill="#fff" d="M163.500 434Q167 425 170.500 434ZM162.500 428h2v2h-2zM165 426h1.500v2H165zM168 426h1.500v2H168zM170 428h2v2h-2z"/>
<path fill="#4b91f1" d="M341 608Q333.500 601 334 596A7 7 0 0 1 348 596Q348.500 601 341 608Z"/><path stroke="none" fill="#fff" d="M336.500 592H339L339.500 593H345L344 597H339.500L338 593H336.500ZM339.500 598h1.500v1.500h-1.500zM342.500 598H344v1.500h-1.500z"/>
<path fill="#7798aa" d="M591.500 496Q584 489 584.500 484A7 7 0 0 1 598.500 484Q599 489 591.500 496Z"/><path stroke="#fff" stroke-width="1.500" fill="none" d="M590 481L593 484 590 487M594 482L592 489"/>
<path fill="#7798aa" d="M828.500 519Q821 512 821.500 507A7 7 0 0 1 835.500 507Q836 512 828.500 519Z"/><circle cx="828.500" cy="507" r="3" fill="#fff"/>
<circle cx="591" cy="765" r="7" fill="#7798aa"/><path stroke="none" fill="#fff" d="M586 763L591 760 596 763 591 766ZM588 765L591 767 594 765V768L591 769 588 768Z"/>
<g fill="#16aee4"><rect x="469" y="546" width="10" height="11" rx="1"/><rect x="527" y="556" width="10" height="11" rx="1"/></g><path fill="none" d="M472 549H477V554H472ZM472 552H477M472.500 554V555.500M476.500 554V555.500M529.500 559H534.500V564H529.500ZM529.500 562H534.500M530 564V565.500M534 564V565.500"/>
</g>
<g class="google"><text x="155" y="766"><tspan fill="#4285f4">G</tspan><tspan fill="#ea4335">o</tspan><tspan fill="#fbbc05">o</tspan><tspan fill="#4285f4">g</tspan><tspan fill="#34a853">l</tspan><tspan fill="#ea4335">e</tspan></text></g>
<path d="M543.500 510Q542 500 536 494Q531 489 532.500 482A11.200 11.200 0 0 1 554.500 482Q556 489 551 494Q545 500 543.500 510Z" fill="#ea4335" stroke="#c7372c" stroke-width=".5"/><circle cx="543.500" cy="484" r="4.300" fill="#811410"/>
</svg>
<div class="types"><button>Map</button><button style="color:#3d5a96">Satellite</button></div>
<button class="full" aria-label="Full screen"><svg width="14" height="13" viewBox="0 0 14 13" fill="none" stroke="#555" stroke-width="2"><path d="M1 4V1H5M9 1H13V4M13 9V12H9M5 12H1V9"/></svg></button>
<div class="info"><span>(၁၀)ဈေး</span><button aria-label="Close"><svg width="11" height="11" viewBox="0 0 11 11" stroke="#999" stroke-width="2"><path d="M1.500 1.500L9.500 9.500M9.500 1.500L1.500 9.500"/></svg></button><svg class="tail" width="20" height="23" viewBox="0 0 20 23"><path d="M1 1L9 21 18 1" fill="#fff" stroke="#bbb"/><path d="M0 0H20V2H0Z" fill="#fff"/></svg></div>
<button class="peg" aria-label="Street View"><svg width="12" height="19" viewBox="0 0 12 19"><path d="M2 7Q6 4 10 7L11 12 9 13 8 18H6.500V13H5.500V18H4L3 13 1 12Z" fill="#f5b321" stroke="#d08a14" stroke-width=".7"/><circle cx="6" cy="3.500" r="3" fill="#f9bf2c" stroke="#d08a14" stroke-width=".7"/><path d="M4 6.500L6 9 8 6.500Z" fill="#e76c27"/></svg></button>
<div class="zoom"><button aria-label="Zoom in"><svg width="11" height="11" viewBox="0 0 11 11"><path d="M4.500 1H6.500V4.500H10V6.500H6.500V10H4.500V6.500H1V4.500H4.500Z" fill="#666"/></svg></button><hr><button aria-label="Zoom out"><svg width="11" height="11" viewBox="0 0 11 11"><path d="M1 4.500H10V6.500H1Z" fill="#666"/></svg></button></div>
<footer><span>Map data ©2018 Google</span><a href="#">Terms of Use</a></footer>`);
</script>
</body>
</html>
